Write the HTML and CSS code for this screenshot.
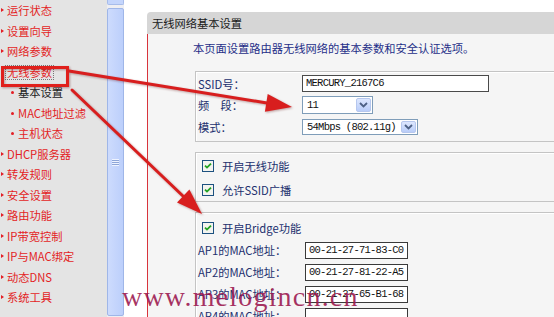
FILE: index.html
```html
<!DOCTYPE html>
<html lang="zh-CN">
<head>
<meta charset="utf-8">
<title>无线网络基本设置</title>
<link rel="stylesheet" href="styles.css">
</head>
<body>
<div class="page">
  <nav class="sidebar">
    <ul class="menu">
      <li class="top">运行状态</li>
      <li class="top">设置向导</li>
      <li class="top">网络参数</li>
      <li class="top"><span class="focus">无线参数</span></li>
      <li class="sub current">基本设置</li>
      <li class="sub">MAC地址过滤</li>
      <li class="sub">主机状态</li>
      <li class="top">DHCP服务器</li>
      <li class="top">转发规则</li>
      <li class="top">安全设置</li>
      <li class="top">路由功能</li>
      <li class="top">IP带宽控制</li>
      <li class="top">IP与MAC绑定</li>
      <li class="top">动态DNS</li>
      <li class="top">系统工具</li>
    </ul>
  </nav>
  <div class="scrollbar">
    <div class="sb-btn"></div>
    <div class="sb-thumb"><span class="grip"></span></div>
  </div>
  <div class="main-frame">
    <div class="panel-head">无线网络基本设置</div>
    <div class="panel-body">
      <p class="desc">本页面设置路由器无线网络的基本参数和安全认证选项。</p>
      <section class="box box-basic">
        <div class="row">
          <span class="label">SSID号：</span>
          <span class="input input-ssid">MERCURY_2167C6</span>
        </div>
        <div class="row">
          <span class="label">频　段：</span>
          <span class="select select-ch"><span class="sel-val">11</span><span class="sel-btn"><svg width="9" height="6" viewBox="0 0 9 6"><path d="M1 1 L4.5 4.5 L8 1" fill="none" stroke="#4d6185" stroke-width="1.8"/></svg></span></span>
        </div>
        <div class="row">
          <span class="label">模式：</span>
          <span class="select select-mode"><span class="sel-val">54Mbps (802.11g)</span><span class="sel-btn"><svg width="9" height="6" viewBox="0 0 9 6"><path d="M1 1 L4.5 4.5 L8 1" fill="none" stroke="#4d6185" stroke-width="1.8"/></svg></span></span>
        </div>
      </section>
      <section class="box box-switch">
        <div class="row check-row">
          <span class="cb"><svg width="12" height="12" viewBox="0 0 12 12"><rect x="0.5" y="0.5" width="11" height="11" fill="#f3f3ef" stroke="#1c5180"/><path d="M3 5.6 L5 7.6 L9 3.6" fill="none" stroke="#21a121" stroke-width="1.8"/></svg></span>
          <span class="cb-text">开启无线功能</span>
        </div>
        <div class="row check-row">
          <span class="cb"><svg width="12" height="12" viewBox="0 0 12 12"><rect x="0.5" y="0.5" width="11" height="11" fill="#f3f3ef" stroke="#1c5180"/><path d="M3 5.6 L5 7.6 L9 3.6" fill="none" stroke="#21a121" stroke-width="1.8"/></svg></span>
          <span class="cb-text">允许SSID广播</span>
        </div>
      </section>
      <section class="box box-bridge">
        <div class="row check-row">
          <span class="cb"><svg width="12" height="12" viewBox="0 0 12 12"><rect x="0.5" y="0.5" width="11" height="11" fill="#f3f3ef" stroke="#1c5180"/><path d="M3 5.6 L5 7.6 L9 3.6" fill="none" stroke="#21a121" stroke-width="1.8"/></svg></span>
          <span class="cb-text">开启Bridge功能</span>
        </div>
        <div class="row ap-row">
          <span class="label ap-label">AP1的MAC地址：</span>
          <span class="input input-ap">00-21-27-71-83-C0</span>
        </div>
        <div class="row ap-row">
          <span class="label ap-label">AP2的MAC地址：</span>
          <span class="input input-ap">00-21-27-81-22-A5</span>
        </div>
        <div class="row ap-row">
          <span class="label ap-label">AP3的MAC地址：</span>
          <span class="input input-ap">00-21-27-65-B1-68</span>
        </div>
        <div class="row ap-row">
          <span class="label ap-label">AP4的MAC地址：</span>
          <span class="input input-ap"></span>
        </div>
      </section>
    </div>
  </div>
</div>

<svg class="annot" width="554" height="317" viewBox="0 0 554 317">
  <rect x="2.5" y="67.5" width="65" height="18" fill="none" stroke="#e0201c" stroke-width="3"/>
  <line x1="69" y1="71" x2="267" y2="103" stroke="#d81e1e" stroke-width="3" stroke-linecap="round"/>
  <polygon points="292,107 267.7,94 264.9,111.8" fill="#d81e1e"/>
  <line x1="72" y1="90" x2="184" y2="197" stroke="#d81e1e" stroke-width="3" stroke-linecap="round"/>
  <polygon points="202,214 177,202.6 189.4,189.6" fill="#d81e1e"/>
</svg>
<div class="watermark">www.melogincn.cn</div>
</body>
</html>
```

FILE: styles.css
```css
html, body {
  margin: 0;
  padding: 0;
  background: #ffffff;
}
body {
  width: 554px;
  height: 317px;
  overflow: hidden;
  position: relative;
  font-family: "Noto Sans CJK SC", "Liberation Sans", sans-serif;
  font-size: 11.25px;
}
.page {
  display: flex;
  height: 317px;
  overflow: hidden;
}

/* sidebar */
.sidebar {
  width: 107px;
  flex: none;
  background: #e4e4e4;
}
.menu {
  list-style: none;
  margin: 0;
  padding: 0;
}
.menu li {
  position: relative;
  height: 20.5px;
  line-height: 20.5px;
  color: #e31e24;
  white-space: nowrap;
}
.menu li.top {
  padding-left: 7px;
}
.menu li.top::before {
  content: "";
  position: absolute;
  left: 1px;
  top: 8px;
  border-left: 3px solid #e31e24;
  border-top: 2.5px solid transparent;
  border-bottom: 2.5px solid transparent;
}
.menu li.sub {
  padding-left: 18px;
}
.menu li.sub::before {
  content: "";
  position: absolute;
  left: 11px;
  top: 9px;
  width: 3px;
  height: 3px;
  border-radius: 50%;
  background: #e31e24;
}
.menu li.current {
  color: #222222;
}
.focus {
  display: inline-block;
  line-height: 13px;
  border: 1px dotted #777777;
  padding: 0 1px;
  margin-left: -2px;
}

/* scrollbar */
.scrollbar {
  width: 17px;
  flex: none;
  display: flex;
  flex-direction: column;
  background: #eeeef2;
}
.sb-btn {
  height: 4px;
  margin-bottom: 3px;
  background: #c4d5fc;
  border: 1px solid #a7bcea;
  border-top: none;
  border-radius: 0 0 2px 2px;
}
.sb-thumb {
  flex: 1;
  margin-bottom: 1px;
  background: linear-gradient(90deg, #cddbfd, #bccffb);
  border: 1px solid #9fb6e8;
  border-radius: 2px;
  display: flex;
  align-items: center;
  justify-content: center;
}
.grip {
  width: 7px;
  height: 7px;
  background: repeating-linear-gradient(180deg, #eef3ff 0 1px, #8ea6d8 1px 2px);
}

/* main frame */
.main-frame {
  flex: 1;
  min-width: 0;
  padding: 12px 0 0 23px;
  display: flex;
  flex-direction: column;
  overflow: hidden;
}
.panel-head {
  height: 22px;
  line-height: 22px;
  padding-left: 5px;
  background: #d6d6d6;
  border-top-left-radius: 4px;
  color: #1a1a1a;
  flex: none;
}
.panel-body {
  flex: 1;
  border-left: 1px solid #d8343c;
  background: #f5f5f5;
}
.desc {
  margin: 0;
  height: 37px;
  box-sizing: border-box;
  padding: 7px 0 0 45px;
  line-height: 14px;
  color: #1f2f88;
  white-space: nowrap;
}
.box {
  margin-left: 47px;
  width: 430px;
  border: 1px solid #c4c4c4;
  box-shadow: inset 1px 1px 0 #ffffff;
}
.box + .box {
  margin-top: 10px;
}
.box-basic {
  height: 69px;
  padding-top: 1px;
  box-sizing: content-box;
}
.box-basic .row {
  height: 21.5px;
}
.box-basic {
  height: 68px;
}
.box-switch {
  height: 46.5px;
  padding-top: 1.5px;
}
.box-switch .row {
  height: 23.5px;
}
.box-bridge {
  padding-top: 4px;
  height: 200px;
}
.box-bridge .row {
  height: 22px;
}
.row {
  display: flex;
  align-items: center;
  padding-left: 2px;
}
.label {
  width: 104px;
  flex: none;
  color: #22306e;
  white-space: nowrap;
}
.ap-label {
  width: 107px;
}
.input {
  box-sizing: border-box;
  height: 17px;
  border: 1px solid #4a4a4a;
  background: #ffffff;
  font-family: "Liberation Mono", monospace;
  font-size: 10.5px;
  letter-spacing: -0.75px;
  line-height: 15px;
  padding-left: 3px;
  color: #111111;
  white-space: nowrap;
}
.input-ssid {
  width: 187px;
}
.input-ap {
  width: 103px;
  border-color: #3a3a3a;
}
.select {
  box-sizing: border-box;
  height: 18px;
  border: 1px solid #7f9db9;
  background: #ffffff;
  display: flex;
  align-items: center;
  justify-content: space-between;
  font-family: "Liberation Mono", monospace;
  font-size: 10.5px;
  letter-spacing: -0.75px;
  color: #111111;
}
.select-ch {
  width: 71px;
}
.select-mode {
  width: 116px;
  height: 16px;
}
.sel-val {
  padding-left: 4px;
  white-space: nowrap;
}
.sel-btn {
  box-sizing: border-box;
  width: 15px;
  height: 14px;
  margin-right: 1px;
  background: linear-gradient(#dde7fe, #b9cdf9);
  border: 1px solid #b6c7ee;
  border-radius: 2px;
  display: flex;
  align-items: center;
  justify-content: center;
}
.select-mode .sel-btn {
  height: 12px;
}
.check-row {
  padding-left: 6px;
}
.cb {
  width: 12px;
  height: 12px;
  flex: none;
  display: flex;
}
.cb-text {
  margin-left: 8px;
  color: #22306e;
  white-space: nowrap;
}

/* overlays */
.annot {
  position: absolute;
  left: 0;
  top: 0;
  pointer-events: none;
  filter: drop-shadow(1px 1px 0.8px rgba(90, 0, 0, 0.35));
}
.watermark {
  position: absolute;
  left: 122px;
  top: 282.5px;
  font-family: "Liberation Serif", serif;
  font-size: 28px;
  line-height: 28px;
  letter-spacing: 1.2px;
  color: rgba(155, 22, 78, 0.88);
  white-space: nowrap;
  pointer-events: none;
}
```
